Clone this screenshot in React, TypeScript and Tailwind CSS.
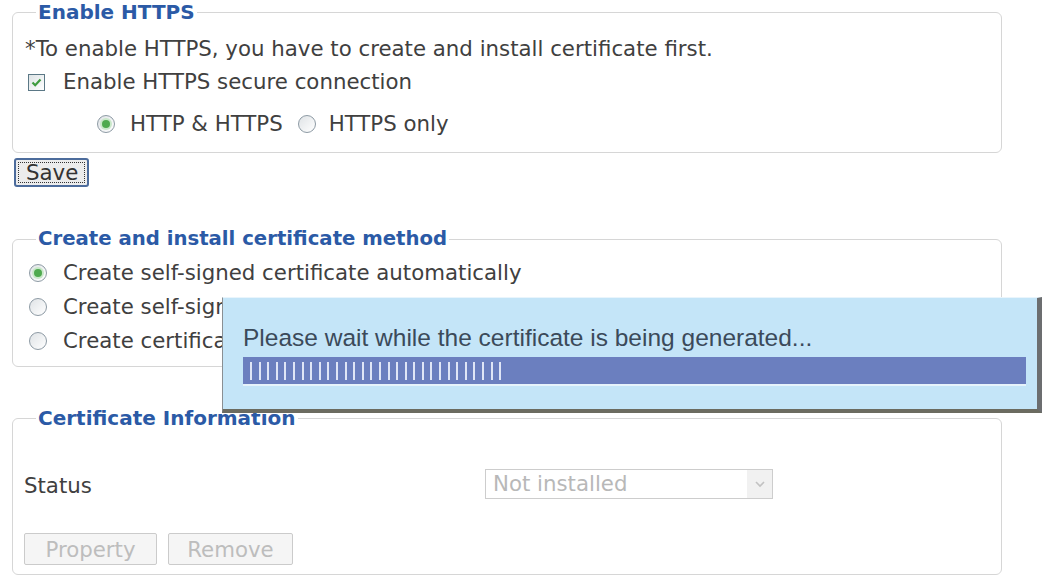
const stripes = Array.from({ length: 30 });

function Radio({ checked }: { checked?: boolean }) {
  return (
    <span className="flex h-[18px] w-[18px] shrink-0 items-center justify-center rounded-full border border-[#8d9aa4] bg-[linear-gradient(135deg,#dfe3e6,#ffffff)]">
      {checked && <span className="h-[8px] w-[8px] rounded-full bg-[#4faa4f] shadow-[0_0_0_2px_#c9e8c9]" />}
    </span>
  );
}

function Checkbox() {
  return (
    <span className="flex h-[17px] w-[17px] shrink-0 items-center justify-center border border-[#5b7886] bg-[linear-gradient(135deg,#dde3e5,#ffffff)]">
      <svg width="11" height="11" viewBox="0 0 11 11">
        <path d="M1.5 5.5 L4.2 8.2 L9.5 2.5" fill="none" stroke="#3e9b3e" strokeWidth="2.2" />
      </svg>
    </span>
  );
}

export default function App() {
  return (
    <div className="relative h-[576px] w-[1045px] overflow-hidden bg-white pt-[2px] font-['DejaVu_Sans',sans-serif] text-[21.3px] text-[#404040]">
      {/* Enable HTTPS */}
      <fieldset className="ml-[12px] w-[990px] rounded-[6px] border border-[#d6d6d6] px-[12px] pb-[12px]">
        <legend className="ml-[11px] h-[20px] px-[2px] text-[20px] leading-[20px] font-bold text-[#2b5aa6]">Enable HTTPS</legend>
        <div className="mt-[13px] flex h-[28px] items-center">*To enable HTTPS, you have to create and install certificate first.</div>
        <div className="mt-[3px] flex h-[32px] items-center">
          <span className="ml-[3px]">
            <Checkbox />
          </span>
          <span className="ml-[18px]">Enable HTTPS secure connection</span>
        </div>
        <div className="mt-[10px] flex h-[32px] items-center">
          <span className="ml-[72px]">
            <Radio checked />
          </span>
          <span className="ml-[15px]">HTTP &amp; HTTPS</span>
          <span className="ml-[15px]">
            <Radio />
          </span>
          <span className="ml-[13px]">HTTPS only</span>
        </div>
      </fieldset>

      <button className="mt-[5px] ml-[14px] flex h-[29px] w-[75px] items-center rounded-[3px] border-2 border-[#4d6c9c] bg-[#ececec] p-[2px]">
        <span className="flex h-full w-full items-center border border-dotted border-[#333] pl-[7px] leading-none text-[#333]">Save</span>
      </button>

      {/* Create and install certificate method */}
      <fieldset className="mt-[42px] ml-[12px] w-[990px] rounded-[6px] border border-[#d6d6d6] px-[12px] pb-[8px]">
        <legend className="ml-[11px] h-[20px] px-[2px] text-[19.7px] leading-[20px] font-bold text-[#2b5aa6]">Create and install certificate method</legend>
        <div className="mt-[7px] flex h-[34px] items-center">
          <span className="ml-[4px]">
            <Radio checked />
          </span>
          <span className="ml-[16px]">Create self-signed certificate automatically</span>
        </div>
        <div className="flex h-[34px] items-center">
          <span className="ml-[4px]">
            <Radio />
          </span>
          <span className="ml-[16px]">Create self-signed certificate manually</span>
        </div>
        <div className="flex h-[34px] items-center">
          <span className="ml-[4px]">
            <Radio />
          </span>
          <span className="ml-[16px]">Create certificate request and install</span>
        </div>
      </fieldset>

      {/* Certificate Information */}
      <fieldset className="mt-[41px] ml-[12px] w-[990px] rounded-[6px] border border-[#d6d6d6] px-[11px] pb-[9px]">
        <legend className="ml-[12px] h-[20px] px-[2px] text-[20px] leading-[20px] font-bold text-[#2b5aa6]">Certificate Information</legend>
        <div className="mt-[41px] flex h-[30px] items-center">
          <span className="w-[461px] pt-[3px]">Status</span>
          <div className="flex h-[30px] w-[288px] items-center border border-[#cdcdcd] bg-white">
            <span className="flex-1 pl-[7px] text-[#b8b8b8]">Not installed</span>
            <span className="flex h-full w-[25px] items-center justify-center bg-[#f1f1f1]">
              <svg width="10" height="8" viewBox="0 0 10 8">
                <path d="M1 2 L5 6 L9 2" fill="none" stroke="#c2c2c2" strokeWidth="1.6" />
              </svg>
            </span>
          </div>
        </div>
        <div className="mt-[34px] flex gap-[11px]">
          <button className="h-[32px] w-[133px] rounded-[2px] border border-[#cbcbcb] bg-[#f5f5f5] text-[#bdbdbd]">Property</button>
          <button className="h-[32px] w-[125px] rounded-[2px] border border-[#cbcbcb] bg-[#f5f5f5] text-[#bdbdbd]">Remove</button>
        </div>
      </fieldset>

      {/* progress popup */}
      <div className="absolute top-[297px] left-[222px] h-[116px] w-[820px] border-t border-l border-t-[#e9f5fc] border-l-[#8a8f93] border-r-[5px] border-b-[4px] border-r-[#6c6e70] border-b-[#6b6b60] bg-[#c4e5f8] pt-[26px] pr-[11px] pl-[20px] font-['Liberation_Sans',sans-serif]">
        <div className="h-[28px] text-[24.5px] leading-[28px] text-[#3b4a5a]">Please wait while the certificate is being generated...</div>
        <div className="mt-[5px] flex h-[29px] items-center gap-[6.6px] border-b-2 border-b-[#e6f3fb] bg-[#6b7fbf] pl-[7px]">
          {stripes.map((_, i) => (
            <span key={i} className="h-[18px] w-[2px] bg-[#dfe5f6]" />
          ))}
        </div>
      </div>
    </div>
  );
}
